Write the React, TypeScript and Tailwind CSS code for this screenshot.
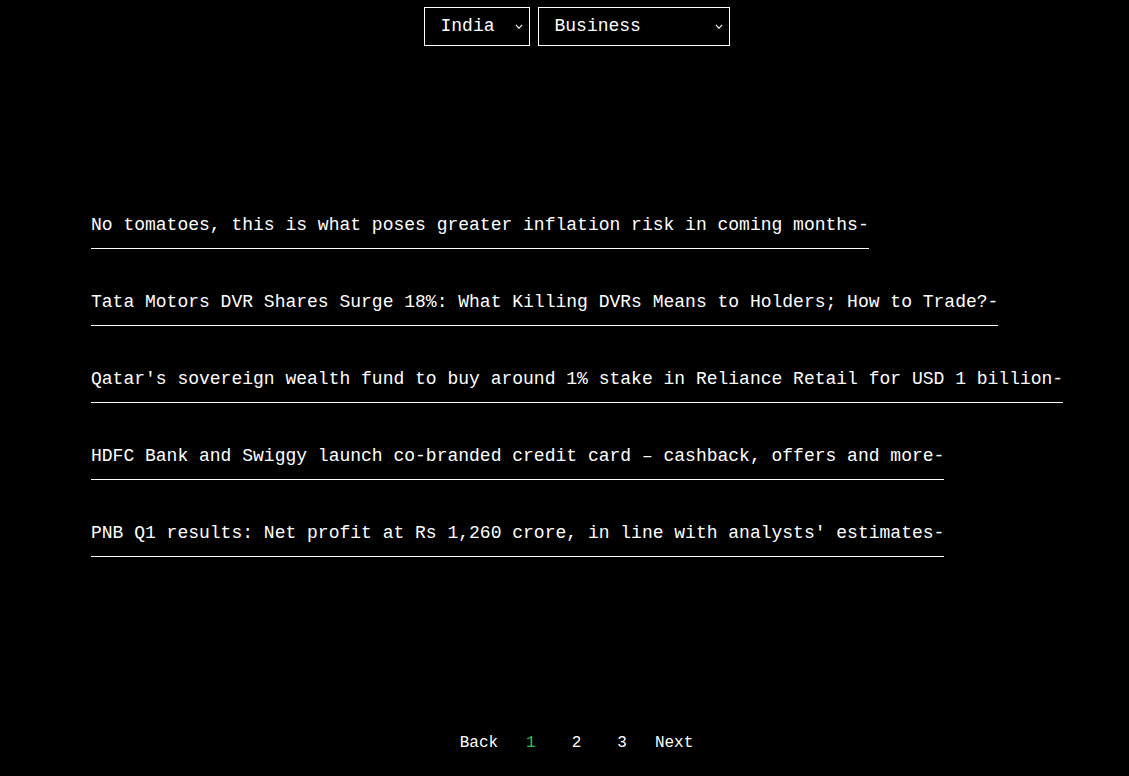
import { useState } from "react";

const headlines = [
  "No tomatoes, this is what poses greater inflation risk in coming months-",
  "Tata Motors DVR Shares Surge 18%: What Killing DVRs Means to Holders; How to Trade?-",
  "Qatar's sovereign wealth fund to buy around 1% stake in Reliance Retail for USD 1 billion-",
  "HDFC Bank and Swiggy launch co-branded credit card – cashback, offers and more-",
  "PNB Q1 results: Net profit at Rs 1,260 crore, in line with analysts' estimates-",
];

function Chevron() {
  return (
    <svg
      viewBox="0 0 10 6"
      className="pointer-events-none absolute top-[17px] right-[7px] h-[5px] w-[8px]"
      fill="none"
      stroke="white"
      strokeWidth="1.4"
    >
      <path d="M1 1l4 4 4-4" />
    </svg>
  );
}

export default function App() {
  const [country, setCountry] = useState("India");
  const [category, setCategory] = useState("Business");
  const [page, setPage] = useState(1);

  return (
    <div className="flex min-h-[776px] flex-col bg-black font-['Liberation_Mono',monospace] text-white">
      {/* Filters */}
      <div className="flex justify-center gap-2 pt-[7px] pl-[24px]">
        <div className="relative flex">
          <select
            value={country}
            onChange={(e) => setCountry(e.target.value)}
            className="h-[39px] w-[106px] appearance-none border border-white bg-black pl-[16px] text-[18px] text-white outline-none"
          >
            <option>India</option>
            <option>USA</option>
          </select>
          <Chevron />
        </div>
        <div className="relative flex">
          <select
            value={category}
            onChange={(e) => setCategory(e.target.value)}
            className="h-[39px] w-[192px] appearance-none border border-white bg-black pl-[16px] text-[18px] text-white outline-none"
          >
            <option>Business</option>
            <option>Sports</option>
            <option>Technology</option>
          </select>
          <Chevron />
        </div>
      </div>

      {/* Headlines */}
      <div className="flex flex-col items-start gap-[40px] pt-[166px] pl-[91px]">
        {headlines.map((h) => (
          <a
            key={h}
            href="#"
            className="inline-block border-b border-white pb-[9px] text-[18px] leading-[27px] whitespace-nowrap text-white"
          >
            {h}
          </a>
        ))}
      </div>

      {/* Pagination */}
      <div className="mt-auto flex justify-center pb-[21px] pl-[24px] text-[16px] leading-[24px]">
        <button className="mr-[28px]">Back</button>
        {[1, 2, 3].map((n) => (
          <button
            key={n}
            onClick={() => setPage(n)}
            className={`${n === 3 ? "mr-[28px]" : "mr-[36px]"} ${page === n ? "text-[#28c450]" : "text-white"}`}
          >
            {n}
          </button>
        ))}
        <button>Next</button>
      </div>
    </div>
  );
}
